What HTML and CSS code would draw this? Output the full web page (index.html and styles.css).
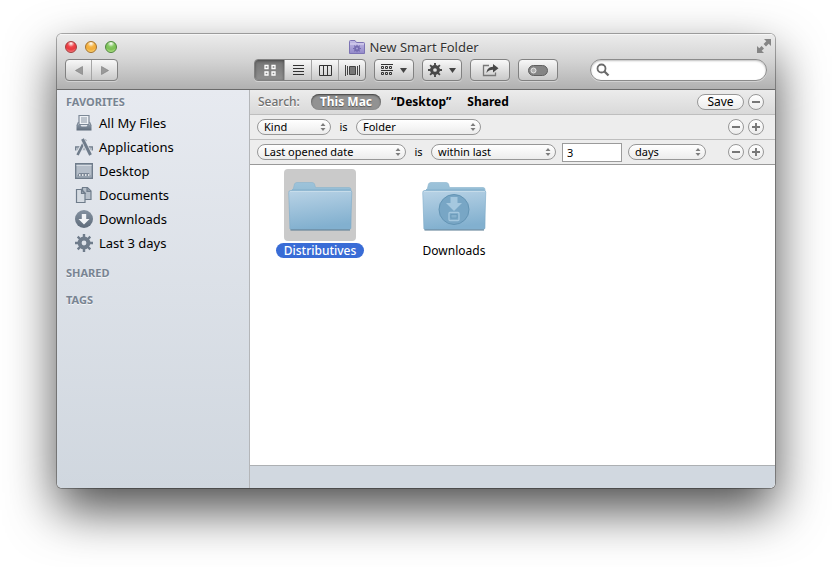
FILE: index.html
```html
<!DOCTYPE html>
<html lang="en">
<head>
<meta charset="utf-8">
<title>New Smart Folder</title>
<link rel="stylesheet" href="styles.css">
</head>
<body>
<svg width="0" height="0" class="defs" aria-hidden="true">
  <defs>
    <linearGradient id="front" x1="0" y1="0" x2="0.2" y2="1"><stop offset="0" stop-color="#b9d3e6"/><stop offset="1" stop-color="#82b0cf"/></linearGradient>
    <linearGradient id="back" x1="0" y1="0" x2="0" y2="1"><stop offset="0" stop-color="#9dc3da"/><stop offset="1" stop-color="#74a4c2"/></linearGradient>
    <linearGradient id="purple" x1="0" y1="0" x2="0" y2="1"><stop offset="0" stop-color="#c4bde6"/><stop offset="1" stop-color="#9389c9"/></linearGradient>
    <linearGradient id="slate" x1="0" y1="0" x2="0" y2="1"><stop offset="0" stop-color="#8491a0"/><stop offset="1" stop-color="#5f6c7b"/></linearGradient>
    <symbol id="gear" viewBox="-9 -9 18 18">
      <circle r="4.400" fill="none" stroke="currentColor" stroke-width="4"/>
      <path d="M0-5.500V-9M0 5.500V9M-5.500 0H-9M5.500 0H9M-4-4L-6.300-6.300M4 4L6.300 6.300M-4 4L-6.300 6.300M4-4L6.300-6.300" stroke="currentColor" stroke-width="2.400"/>
    </symbol>
    <symbol id="folder" viewBox="0 0 72 72">
      <path d="M6 60V22l3-1 1.500-6q.5-1.500 2.500-1.500H28q2 0 2.500 1.500l1 3.500H65q2 0 2 2v39z" fill="url(#back)" stroke="#8ab3cc" stroke-width=".6"/>
      <path d="M8 20.500H66" stroke="#8cb6d0"/>
      <path d="M6.500 21.500H66q2 0 1.800 2l-1.300 36q0 1-1.500 1H7.500q-1.500 0-1.500-1l-1.300-36q0-2 1.800-2z" fill="url(#front)" stroke="#83aecb" stroke-width=".6"/>
      <path d="M6 22.500H67" stroke="#cbdfec" stroke-width=".8"/>
      <path d="M6.500 61H66" stroke="#56788f" stroke-width="1.200"/>
    </symbol>
    <symbol id="arrows" viewBox="0 0 6 10"><path d="M3 1l2.500 3h-5zM3 9l2.500-3h-5z" fill="#7d7d7d"/></symbol>
    <symbol id="minus" viewBox="0 0 14 14"><path d="M3 7h8" stroke="#777" stroke-width="1.900"/></symbol>
    <symbol id="plus" viewBox="0 0 14 14"><path d="M3 7h8M7 3v8" stroke="#777" stroke-width="1.900"/></symbol>
  </defs>
</svg>

<div class="window">
  <header class="chrome">
    <div class="titlebar">
      <div class="lights">
        <button class="light red" aria-label="Close"></button>
        <button class="light yellow" aria-label="Minimize"></button>
        <button class="light green" aria-label="Zoom"></button>
      </div>
      <h1 class="title">
        <svg width="16" height="14" viewBox="0 0 16 14"><path d="M.5 13.500V1.500q0-1 1-1H6l1.500 2h7q1 0 1 1v10z" fill="url(#purple)" stroke="#7c73b4"/><path d="M1 4h14" stroke="#ded9f3"/><use href="#gear" x="4" y="4.500" width="8" height="8" color="#756bb0"/></svg>
        New Smart Folder
      </h1>
      <button class="full" aria-label="Full screen"><svg width="14" height="14" viewBox="0 0 14 14" fill="#858585"><path d="M7 0h7v7l-2.300-2.300L9 7.400 6.600 5l2.700-2.700zM0 7l2.300 2.300L4.600 7 7 9.400l-2.300 2.300L7 14H0z"/></svg></button>
    </div>
    <div class="toolbar">
      <div class="group nav">
        <button aria-label="Back"><svg width="8" height="9" viewBox="0 0 8 9"><path d="M7.500.5v8L.5 4.500z" fill="#9a9a9a" stroke="#7a7a7a" stroke-width=".6"/></svg></button>
        <button aria-label="Forward"><svg width="8" height="9" viewBox="0 0 8 9"><path d="M.5.5v8l7-4z" fill="#9a9a9a" stroke="#7a7a7a" stroke-width=".6"/></svg></button>
      </div>
      <div class="group views">
        <button class="on" aria-label="Icons"><svg width="12" height="12" viewBox="0 0 12 12" fill="none" stroke="#fff" stroke-width="1.300"><path d="M1 1.500h3v3H1zM8 1.500h3v3H8zM1 8h3v3H1zM8 8h3v3H8z"/></svg></button>
        <button aria-label="List"><svg width="11" height="11" viewBox="0 0 11 11" stroke="#333"><path d="M0 .5h11M0 3.500h11M0 6.500h11M0 9.500h11"/></svg></button>
        <button aria-label="Columns"><svg width="13" height="11" viewBox="0 0 13 11" fill="none" stroke="#333"><path d="M.5.500h12v10H.5zM4.500.5v10M8.500.5v10"/></svg></button>
        <button aria-label="Cover Flow"><svg width="15" height="11" viewBox="0 0 15 11" stroke="#444"><path d="M.5 0v11M2.500 1v9M12.500 1v9M14.500 0v11" fill="none"/><path d="M4.500 1.500h6v8h-6z" fill="#777"/></svg></button>
      </div>
      <button class="tool" aria-label="Arrange">
        <svg width="12" height="12" viewBox="0 0 12 12" fill="none" stroke="#333"><path d="M0 .5h12"/><path d="M.5 2.500h2v2h-2zM4.500 2.500h2v2h-2zM8.500 2.500h2v2h-2z"/><path d="M0 6.500h12"/><path d="M.5 8.500h2v2h-2zM4.500 8.500h2v2h-2zM8.500 8.500h2v2h-2z"/></svg>
        <svg width="7" height="5" viewBox="0 0 7 5"><path d="M0 0h7L3.500 5z" fill="#444"/></svg>
      </button>
      <button class="tool" aria-label="Action">
        <svg width="14" height="14" color="#484848"><use href="#gear"/></svg>
        <svg width="7" height="5" viewBox="0 0 7 5"><path d="M0 0h7L3.500 5z" fill="#444"/></svg>
      </button>
      <button class="tool" aria-label="Share"><svg width="17" height="14" viewBox="0 0 17 14"><path d="M7 2.500H1.500v10h12V9.500" fill="none" stroke="#777" stroke-width="1.300"/><path d="M4.500 10C5 6 7 4 11 3.800V1l5.500 4.300L11 9.500V6.800C8 6.800 6 7.500 4.500 10z" fill="#484848"/></svg></button>
      <button class="tool" aria-label="Edit tags"><svg width="20" height="11" viewBox="0 0 20 11"><rect x=".5" y=".5" width="19" height="10" rx="5" fill="#858585" stroke="#606060"/><circle cx="5.500" cy="5.500" r="2.500" fill="#b0b0b0" stroke="#e8e8e8"/></svg></button>
      <label class="search">
        <svg width="14" height="14" viewBox="0 0 14 14" fill="none" stroke="#6b6b6b"><circle cx="5.500" cy="5.500" r="4" stroke-width="1.800"/><path d="M8.500 8.500l4 4" stroke-width="2.300"/></svg>
        <input type="search" aria-label="Search">
      </label>
    </div>
  </header>

  <div class="main">
    <nav class="sidebar">
      <h2>FAVORITES</h2>
      <ul>
        <li><a href="#"><svg width="18" height="18" viewBox="0 0 18 18"><path d="M4 1.500h10v9H4z" fill="#eef1f5" stroke="#7c8896" stroke-width="1.200"/><path d="M6 4h6M6 6h6M6 8h6" stroke="#8b97a5"/><path d="M3.500 8L2 11.500M14.500 8l1.500 3.500" stroke="#7c8896" stroke-width="1.200"/><path d="M1.500 11h4l1 1.500h5l1-1.500h4v5.500h-15z" fill="url(#slate)"/></svg>All My Files</a></li>
        <li><a href="#"><svg width="18" height="18" viewBox="0 0 18 18" fill="none" stroke="#6f7c8b"><path d="M.7 12.500V9H17.300v3.500" stroke-width="1.300"/><path d="M1.500 11h15" stroke="#aab3be" stroke-width="2.500"/><path d="M10.500 1.500L2.500 17" stroke="#e2e6ec" stroke-width="4.500"/><path d="M10.500 1.500L2.500 17" stroke-width="2.600"/><path d="M7.500 1L15.500 17" stroke="#e2e6ec" stroke-width="4.500"/><path d="M7.500 1L15.500 17" stroke-width="3"/></svg>Applications</a></li>
        <li><a href="#"><svg width="18" height="16" viewBox="0 0 18 16"><path d="M.7.7h16.600v14.600H.7z" fill="#b5bec9" stroke="#6f7c8b" stroke-width="1.400"/><path d="M1.500 2.500h15" stroke="#d5dbe2"/><path d="M2 13.500L4 10h10l2 3.500z" fill="#7b8796"/><path d="M4 12h1.500M7 12h1.500M10 12h1.500M13 12h1.500" stroke="#fff" stroke-width="1.700"/></svg>Desktop</a></li>
        <li><a href="#"><svg width="18" height="18" viewBox="0 0 18 18" stroke="#6f7c8b" stroke-width="1.200"><path d="M7.500 1.500h5l3.500 3.500v8.500H7.500z" fill="#b7c0ca"/><path d="M12 1.500v4h4" fill="#8d99a7"/><path d="M1.500 3.500h5l3.500 3.500v9.500H1.500z" fill="#d5dbe2"/><path d="M6.500 3.500V7.500H10z" fill="#9ea9b5"/></svg>Documents</a></li>
        <li><a href="#"><svg width="18" height="18" viewBox="0 0 18 18"><circle cx="9" cy="9" r="9" fill="url(#slate)"/><path d="M6.800 4h4.400v5H14.500L9 14.500 3.500 9h3.300z" fill="#f2f4f7"/></svg>Downloads</a></li>
        <li><a href="#"><svg width="18" height="18" color="#6f7c8b"><use href="#gear"/></svg>Last 3 days</a></li>
      </ul>
      <h2>SHARED</h2>
      <h2>TAGS</h2>
    </nav>

    <section class="content">
      <div class="row scope">
        <span class="caption">Search:</span>
        <button class="place on">This Mac</button>
        <button class="place">“Desktop”</button>
        <button class="place">Shared</button>
        <span class="end"><button class="save">Save</button><button class="round" aria-label="Remove search"><svg width="14" height="14"><use href="#minus"/></svg></button></span>
      </div>
      <div class="row">
        <span class="popup kind"><select aria-label="Attribute"><option>Kind</option></select><svg width="6" height="10"><use href="#arrows"/></svg></span>
        <span class="is">is</span>
        <span class="popup value"><select aria-label="Kind of item"><option>Folder</option></select><svg width="6" height="10"><use href="#arrows"/></svg></span>
        <span class="end"><button class="round" aria-label="Remove rule"><svg width="14" height="14"><use href="#minus"/></svg></button><button class="round" aria-label="Add rule"><svg width="14" height="14"><use href="#plus"/></svg></button></span>
      </div>
      <div class="row last">
        <span class="popup date"><select aria-label="Attribute"><option>Last opened date</option></select><svg width="6" height="10"><use href="#arrows"/></svg></span>
        <span class="is">is</span>
        <span class="popup value"><select aria-label="Range"><option>within last</option></select><svg width="6" height="10"><use href="#arrows"/></svg></span>
        <input class="amount" type="text" value="3" aria-label="Amount">
        <span class="popup unit"><select aria-label="Unit"><option>days</option></select><svg width="6" height="10"><use href="#arrows"/></svg></span>
        <span class="end"><button class="round" aria-label="Remove rule"><svg width="14" height="14"><use href="#minus"/></svg></button><button class="round" aria-label="Add rule"><svg width="14" height="14"><use href="#plus"/></svg></button></span>
      </div>
      <div class="files">
        <div class="file selected">
          <svg class="icon" width="72" height="72"><use href="#folder"/></svg>
          <span class="name">Distributives</span>
        </div>
        <div class="file">
          <svg class="icon" width="72" height="72" viewBox="0 0 72 72"><use href="#folder"/><circle cx="36" cy="40.500" r="15" fill="#78a6c5" stroke="#6394b4"/><path d="M32.500 28h7v6H44l-8 8-8-8h4.500z" fill="#a5c8df"/><path d="M32 43.500h8q1 0 1 1v6q0 1-1 1h-8q-1 0-1-1v-6q0-1 1-1z" fill="#78a6c5" stroke="#a5c8df" stroke-width="1.300"/><path d="M33 45.500h6v3.500h-6z" fill="#85b0cc" stroke="#6394b4" stroke-width=".6"/></svg>
          <span class="name">Downloads</span>
        </div>
      </div>
      <footer class="status"></footer>
    </section>
  </div>
</div>
</body>
</html>
```
FILE: styles.css
```css
* { box-sizing: border-box; }
body {
  margin: 0;
  min-height: 100vh;
  padding: 34px 57px 79px;
  display: flex;
  background: #fff;
  color: #000;
  font: 13px/16px "Noto Sans", "Open Sans", sans-serif;
}
.defs { position: absolute; }
svg { display: block; flex: none; }
button, input, select { font: inherit; color: inherit; margin: 0; padding: 0; border: 0; background: none; }
h1, h2, ul { margin: 0; padding: 0; font: inherit; }
li { list-style: none; }

.window {
  flex: 1;
  display: flex;
  flex-direction: column;
  border-radius: 5px;
  overflow: hidden;
  box-shadow: 0 0 0 1px rgba(0,0,0,.3), 0 22px 50px rgba(0,0,0,.7);
}

/* title bar and toolbar */
.chrome {
  padding: 0 8px 8px;
  background: linear-gradient(#ebebeb, #d2d2d2 50%, #b1b1b1);
  border-top: 1px solid #f6f6f6;
  border-bottom: 1px solid #6b6b6b;
}
.titlebar { display: grid; grid-template-columns: 60px 1fr 64px; height: 24px; align-items: center; }
.lights { display: flex; gap: 8px; }
.light { width: 12px; height: 12px; border-radius: 50%; border: 1px solid; }
.red { border-color: #a33b3b; background: radial-gradient(circle at 50% 15%, #fff 0, #f0464b 35%, #e8393f 60%, #ff9a9a); }
.yellow { border-color: #a5712b; background: radial-gradient(circle at 50% 15%, #fff 0, #f5b545 35%, #f3ac3b 60%, #ffe98c); }
.green { border-color: #4d853b; background: radial-gradient(circle at 50% 15%, #fff 0, #85c862 35%, #7cc055 60%, #cff7a0); }
.title { display: flex; justify-content: center; align-items: center; gap: 4px; color: #333; text-shadow: 0 1px 0 rgba(255,255,255,.5); }
.full { justify-self: end; align-self: start; padding-top: 4px; margin-right: -4px; }

.toolbar { display: flex; gap: 8px; }
.group, .tool {
  display: flex;
  height: 22px;
  border: 1px solid #818181;
  border-radius: 4px;
  background: linear-gradient(#f8f8f8, #c9c9c9);
  box-shadow: 0 1px 0 rgba(255,255,255,.35);
}
.group button { flex: 1; display: flex; align-items: center; justify-content: center; }
.group button + button { border-left: 1px solid #a5a5a5; }
.nav { width: 53px; margin-right: 128px; }
.views { width: 112px; overflow: hidden; }
.views .on { flex: none; width: 29px; background: linear-gradient(#747474, #909090); box-shadow: inset 0 1px 3px rgba(0,0,0,.4); }
.tool { width: 40px; align-items: center; justify-content: center; gap: 7px; }
.search {
  display: flex;
  align-items: center;
  width: 177px;
  height: 22px;
  margin-left: auto;
  padding: 0 8px 0 5px;
  border: 1px solid #8b8b8b;
  border-radius: 11px;
  background: #fff;
  box-shadow: inset 0 1px 2px rgba(0,0,0,.25), 0 1px 0 rgba(255,255,255,.35);
}
.search input { flex: 1; min-width: 0; padding-left: 4px; outline: 0; }

.main { flex: 1; display: flex; }

/* sidebar */
.sidebar {
  width: 193px;
  padding-top: 4px;
  background: linear-gradient(#e7eaf0, #d0d7df);
  border-right: 1px solid #b4b6b9;
}
.sidebar h2 { padding-left: 9px; font-size: 11px; font-weight: 700; color: #788492; text-shadow: 0 1px 0 #f4f6f8; }
.sidebar ul { margin: 1px 0 10px; }
.sidebar h2 + h2 { margin-top: 11px; }
.sidebar a { display: flex; align-items: center; gap: 6px; height: 24px; padding-left: 18px; color: #000; text-decoration: none; }

/* search criteria */
.content { flex: 1; display: flex; flex-direction: column; min-width: 0; background: #fff; }
.row {
  display: flex;
  align-items: center;
  height: 25px;
  padding: 0 11px 0 7px;
  font-size: 11px;
  background: #ededed;
  border-bottom: 1px solid #bebebe;
}
.row.last { border-bottom-color: #999; }
.scope { padding-left: 8px; font-size: 12px; background: linear-gradient(#ececec, #d9d9d9); }
.caption { margin-right: 11px; font-weight: 500; color: #707070; text-shadow: 0 1px 0 #fff; }
.place { height: 16px; padding: 0 8px; border-radius: 8px; font-weight: 700; line-height: 16px; }
.place.on { padding: 0 9px; margin-right: 2px; color: #fff; background: #929292; box-shadow: inset 0 1px 2px rgba(0,0,0,.6); text-shadow: 0 1px 1px #555; }
.end { display: flex; gap: 4px; margin-left: auto; }
.save, .round, .popup select {
  height: 16px;
  border: 1px solid #979797;
  border-radius: 8px;
  background: linear-gradient(#fff, #ececec);
}
.save { width: 47px; line-height: 14px; }
.round { width: 16px; }
.popup { position: relative; }
.popup svg { position: absolute; right: 5px; top: 3px; pointer-events: none; }
.popup select { display: block; width: 100%; padding: 0 14px 0 6px; line-height: 14px; appearance: none; }
.kind { width: 74px; }
.value { width: 125px; }
.date { width: 149px; }
.unit { width: 78px; }
.is { width: 25px; text-align: center; }
.amount { width: 60px; height: 19px; margin: 0 6px; padding-left: 4px; border: 1px solid #9b9b9b; background: #fff; }

.files { flex: 1; display: flex; flex-wrap: wrap; align-content: flex-start; padding: 4px 3px; }
.file { width: 134px; display: flex; flex-direction: column; align-items: center; gap: 2px; font-size: 12px; }
.icon { border-radius: 4px; }
.name { padding: 0 8px; border-radius: 8px; line-height: 15px; }
.selected .icon { background: #cacaca; }
.selected .name { background: #396cd6; color: #fff; font-weight: 500; }
.status { height: 23px; background: #d1d8e0; border-top: 1px solid #adb0b3; }
```
